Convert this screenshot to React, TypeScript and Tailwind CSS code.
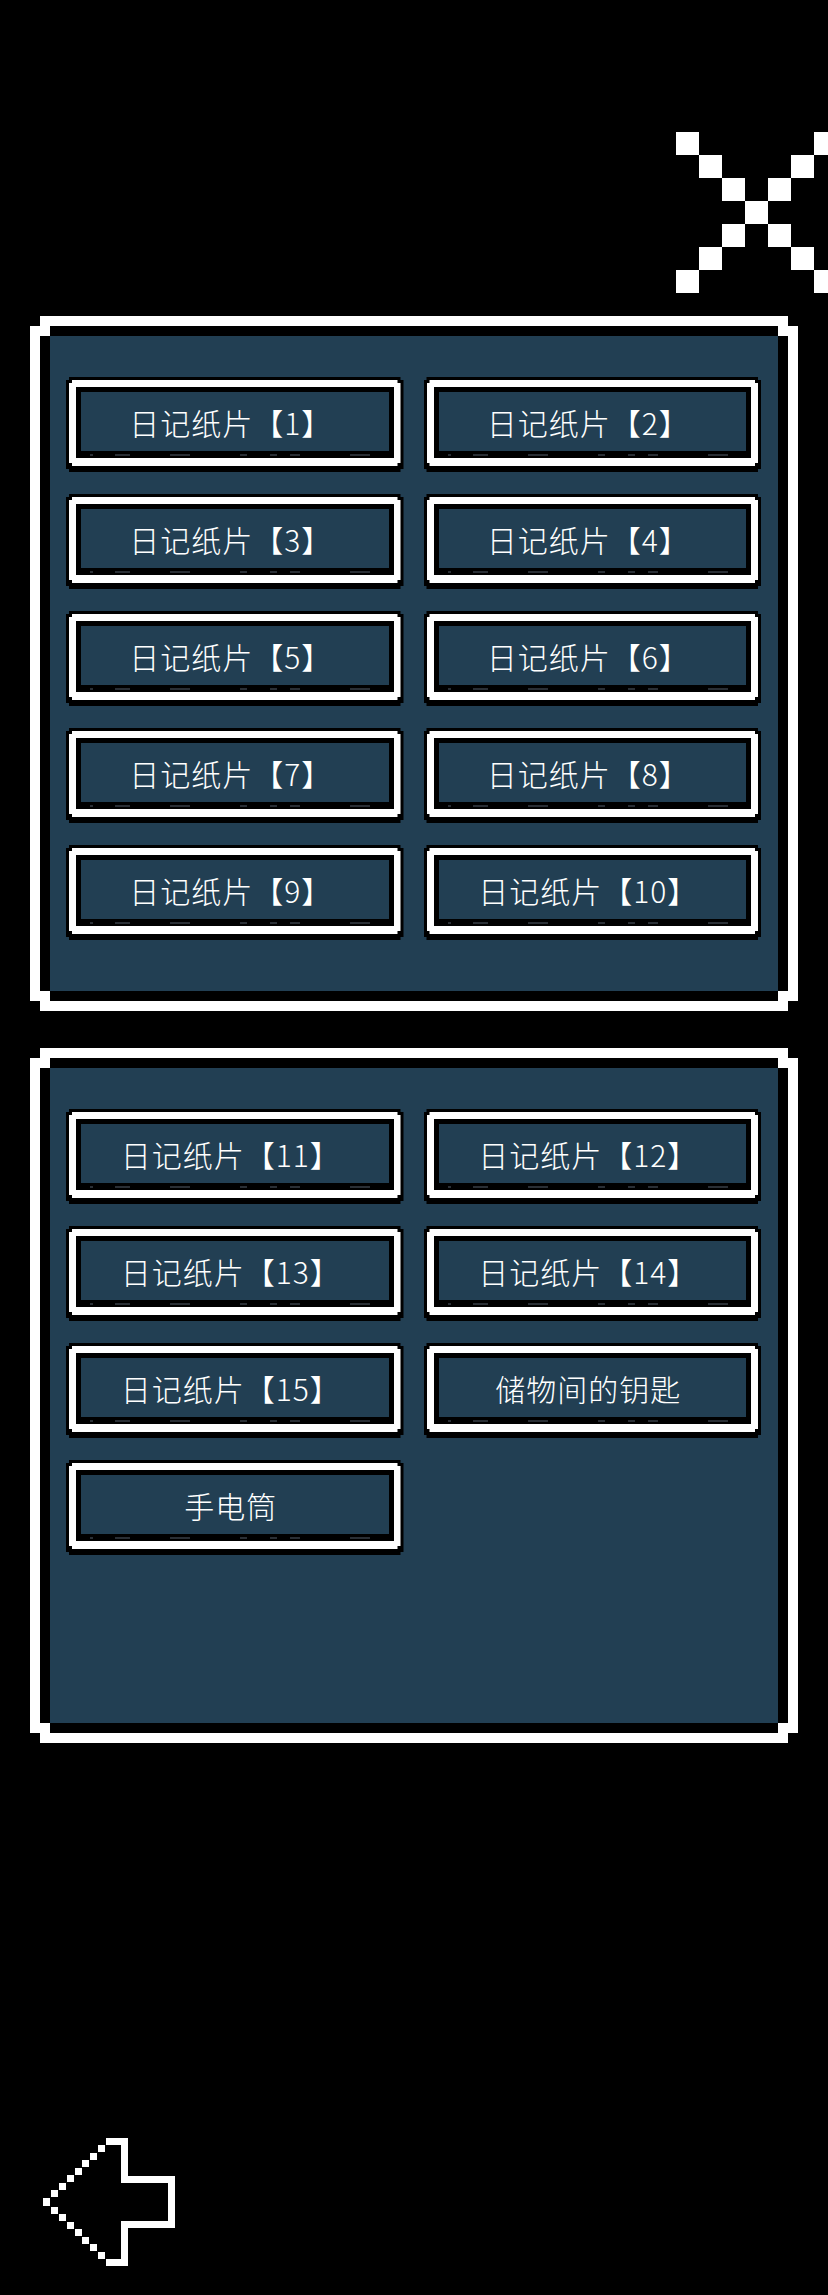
import React from 'react';

const panelClip =
  '[clip-path:polygon(10px_0,calc(100%_-_10px)_0,calc(100%_-_10px)_10px,100%_10px,100%_calc(100%_-_10px),calc(100%_-_10px)_calc(100%_-_10px),calc(100%_-_10px)_100%,10px_100%,10px_calc(100%_-_10px),0_calc(100%_-_10px),0_10px,10px_10px)]';

const btnClip =
  '[clip-path:polygon(3px_0,calc(100%_-_3px)_0,calc(100%_-_3px)_3px,100%_3px,100%_calc(100%_-_3px),calc(100%_-_3px)_calc(100%_-_3px),calc(100%_-_3px)_100%,3px_100%,3px_calc(100%_-_3px),0_calc(100%_-_3px),0_3px,3px_3px)]';

// worn specks along the bottom edge of every slot
const specks: [number, number][] = [
  [14, 3],
  [39, 15],
  [94, 20],
  [164, 7],
  [194, 7],
  [214, 10],
  [274, 20],
];

const firstPage = [
  '日记纸片【1】',
  '日记纸片【2】',
  '日记纸片【3】',
  '日记纸片【4】',
  '日记纸片【5】',
  '日记纸片【6】',
  '日记纸片【7】',
  '日记纸片【8】',
  '日记纸片【9】',
  '日记纸片【10】',
];

const secondPage = [
  '日记纸片【11】',
  '日记纸片【12】',
  '日记纸片【13】',
  '日记纸片【14】',
  '日记纸片【15】',
  '储物间的钥匙',
  '手电筒',
];

function CloseIcon() {
  const cells = [
    [0, 0], [6, 0], [1, 1], [5, 1], [2, 2], [4, 2], [3, 3],
    [2, 4], [4, 4], [1, 5], [5, 5], [0, 6], [6, 6],
  ];
  return (
    <svg width={161} height={161} viewBox="0 0 7 7" shapeRendering="crispEdges">
      {cells.map(([x, y]) => (
        <rect key={`${x}-${y}`} x={x} y={y} width={1} height={1} fill="#fff" />
      ))}
    </svg>
  );
}

function BackArrow() {
  const steps = Array.from({ length: 8 }, (_, i) => ({
    x: 68 - i * 7.8,
    y: 24 + i * 7.57,
  }));
  return (
    <svg width={160} height={160} viewBox="0 0 160 160" shapeRendering="crispEdges">
      <g fill="#fff">
        <rect x={76} y={17} width={22} height={7} />
        <rect x={91} y={17} width={7} height={45} />
        <rect x={91} y={55} width={54} height={7} />
        <rect x={138} y={55} width={7} height={52} />
        <rect x={91} y={100} width={54} height={7} />
        <rect x={91} y={100} width={7} height={45} />
        <rect x={76} y={138} width={22} height={7} />
        {steps.map((s, i) => (
          <React.Fragment key={i}>
            <rect x={s.x} y={s.y} width={7} height={7} />
            <rect x={s.x} y={162 - s.y - 7} width={7} height={7} />
          </React.Fragment>
        ))}
      </g>
    </svg>
  );
}

function ItemSlot({ label }: { label: string }) {
  return (
    <button
      type="button"
      className={`h-[95px] w-full bg-black px-[3px] pt-[3px] pb-[6px] ${btnClip}`}
    >
      <div className={`h-full bg-white px-[7px] pt-[7px] pb-[8px] ${btnClip}`}>
        <div className="relative h-full bg-black px-[5px] pt-[5px] pb-[7px]">
          <div className="flex h-full items-center justify-center bg-[#223f53] pr-[8px] font-['Noto_Sans_CJK_SC','Noto_Sans',sans-serif] text-[30px] font-light leading-none tracking-[1px] text-white">
            {label}
          </div>
          {specks.map(([left, w]) => (
            <span
              key={left}
              className="absolute bottom-[2px] h-[2px] bg-[#2a2f35]"
              style={{ left, width: w }}
            />
          ))}
        </div>
      </div>
    </button>
  );
}

function ItemPanel({ items }: { items: string[] }) {
  return (
    <div className={`mx-[30px] h-[695px] bg-white p-[10px] ${panelClip}`}>
      <div className={`h-full bg-black p-[10px] ${panelClip}`}>
        <div className="h-full bg-[#223f53] pt-[41px] pl-[16px] pr-[17px]">
          <div className="grid grid-cols-2 gap-x-[20px] gap-y-[22px]">
            {items.map((label) => (
              <ItemSlot key={label} label={label} />
            ))}
          </div>
        </div>
      </div>
    </div>
  );
}

export default function App() {
  return (
    <div className="h-[2295px] w-[828px] overflow-hidden bg-black pt-[132px]">
      <div className="flex justify-end -mr-[9px]">
        <CloseIcon />
      </div>
      <div className="mt-[23px] flex flex-col gap-[37px]">
        <ItemPanel items={firstPage} />
        <ItemPanel items={secondPage} />
      </div>
      <div className="ml-[30px] mt-[378px]">
        <BackArrow />
      </div>
    </div>
  );
}
